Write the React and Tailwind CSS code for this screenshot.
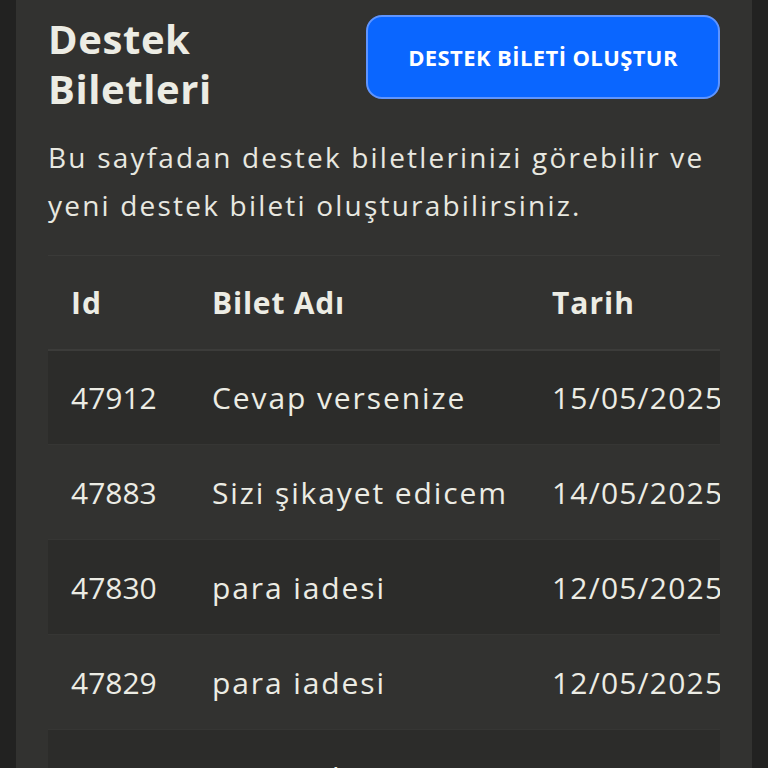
import React from 'react';

const tickets = [
  { id: '47912', name: 'Cevap versenize', date: '15/05/2025' },
  { id: '47883', name: 'Sizi şikayet edicem', date: '14/05/2025' },
  { id: '47830', name: 'para iadesi', date: '12/05/2025' },
  { id: '47829', name: 'para iadesi', date: '12/05/2025' },
  { id: '47801', name: 'para iadesi', date: '10/05/2025' },
];

export default function App() {
  return (
    <div
      className="h-[768px] overflow-hidden bg-[#222221] px-4"
      style={{ fontFamily: '"Open Sans", "Noto Sans", sans-serif' }}
    >
      <div className="h-full bg-[#323230] px-8 pt-[14px] text-[#ecece4]">
        {/* Header */}
        <div className="flex items-start justify-between">
          <h1 className="text-[40px] font-bold leading-[50px] tracking-[0.6px] text-[#ecece4]">
            Destek
            <br />
            Biletleri
          </h1>
          <button
            type="button"
            className="mt-px flex h-[84px] w-[354px] items-center justify-center rounded-[16px] border-2 border-[#5f95ff] bg-[#0a66ff] text-[22px] font-bold tracking-[0.4px] text-white"
          >
            DESTEK BİLETİ OLUŞTUR
          </button>
        </div>

        <p className="mt-[19px] text-[28px] leading-[48px] tracking-[2.2px] text-[#e8e8e0]">
          Bu sayfadan destek biletlerinizi görebilir ve yeni destek bileti oluşturabilirsiniz.
        </p>

        {/* Table */}
        <div className="mt-[26px] overflow-hidden">
          <table className="w-[780px] border-collapse text-left text-[30px] tracking-[1.9px]">
            <thead>
              <tr className="border-t border-b-2 border-t-[#3a3a38] border-b-[#3c3c3a]">
                <th className="h-[94px] w-[164px] pl-[23px] font-bold tracking-[1px]">Id</th>
                <th className="w-[340px] font-bold tracking-[0.8px]">Bilet Adı</th>
                <th className="font-bold tracking-[1px]">Tarih</th>
              </tr>
            </thead>
            <tbody>
              {tickets.map((t, i) => (
                <tr
                  key={t.id}
                  className={`border-b border-[#363634] ${i % 2 === 0 ? 'bg-[#2c2c2a]' : 'bg-[#323230]'}`}
                >
                  <td className="h-[95px] pl-[23px] tracking-normal">{t.id}</td>
                  <td>{t.name}</td>
                  <td className="tracking-[1.2px]">{t.date}</td>
                </tr>
              ))}
            </tbody>
          </table>
        </div>
      </div>
    </div>
  );
}
